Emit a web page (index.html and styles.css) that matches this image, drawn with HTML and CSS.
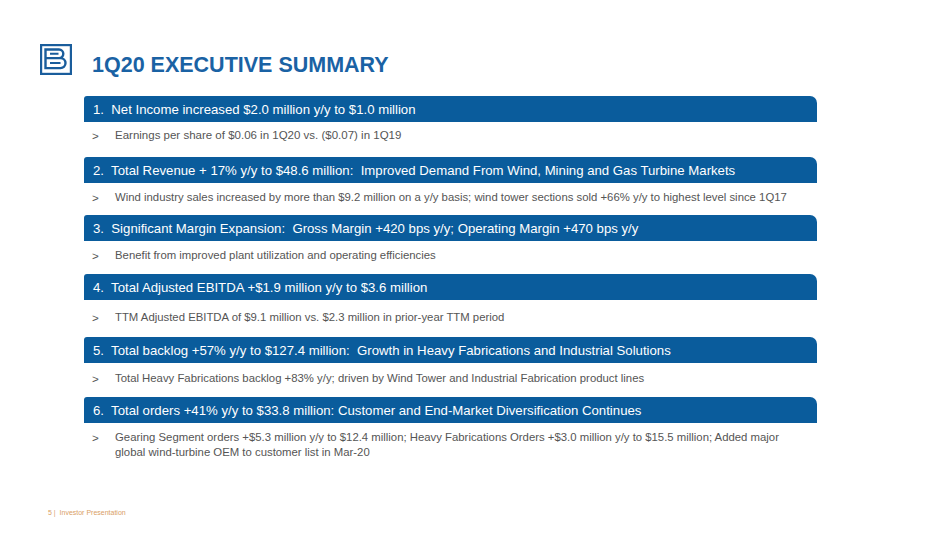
FILE: index.html
```html
<!DOCTYPE html>
<html lang="en">
<head>
<meta charset="utf-8">
<title>1Q20 Executive Summary</title>
<link rel="stylesheet" href="styles.css">
</head>
<body>
<div class="slide">
  <header class="head">
    <svg class="logo" width="32" height="31" viewBox="0 0 32 31">
      <rect x="1.1" y="1.1" width="29.8" height="28.8" fill="none" stroke="#1a5d9c" stroke-width="2.2"/>
      <path d="M5.5 5.5 H19 a4.3 4.3 0 0 1 0 8.6 H5.5 Z M5.5 14.1 H20.5 a5 5 0 0 1 0 10 H5.5 Z" fill="none" stroke="#1a5d9c" stroke-width="2.4"/>
      <path d="M10 9.8 H18.5 M10 19.1 H20.5" stroke="#1a5d9c" stroke-width="2"/>
    </svg>
    <h1 class="title">1Q20 EXECUTIVE SUMMARY</h1>
  </header>
  <ol class="items">
    <li class="item i1">
      <div class="bar">1.&nbsp; Net Income increased $2.0 million y/y to $1.0 million</div>
      <div class="sub"><span class="gt">&gt;</span><span>Earnings per share of $0.06 in 1Q20 vs. ($0.07) in 1Q19</span></div>
    </li>
    <li class="item i2">
      <div class="bar">2.&nbsp; Total Revenue + 17% y/y to $48.6 million:&nbsp; Improved Demand From Wind, Mining and Gas Turbine Markets</div>
      <div class="sub"><span class="gt">&gt;</span><span>Wind industry sales increased by more than $9.2 million on a y/y basis; wind tower sections sold +66% y/y to highest level since 1Q17</span></div>
    </li>
    <li class="item i3">
      <div class="bar">3.&nbsp; Significant Margin Expansion:&nbsp; Gross Margin +420 bps y/y; Operating Margin +470 bps y/y</div>
      <div class="sub"><span class="gt">&gt;</span><span>Benefit from improved plant utilization and operating efficiencies</span></div>
    </li>
    <li class="item i4">
      <div class="bar">4.&nbsp; Total Adjusted EBITDA +$1.9 million y/y to $3.6 million</div>
      <div class="sub"><span class="gt">&gt;</span><span>TTM Adjusted EBITDA of $9.1 million vs. $2.3 million in prior-year TTM period</span></div>
    </li>
    <li class="item i5">
      <div class="bar">5.&nbsp; Total backlog +57% y/y to $127.4 million:&nbsp; Growth in Heavy Fabrications and Industrial Solutions</div>
      <div class="sub"><span class="gt">&gt;</span><span>Total Heavy Fabrications backlog +83% y/y; driven by Wind Tower and Industrial Fabrication product lines</span></div>
    </li>
    <li class="item i6">
      <div class="bar">6.&nbsp; Total orders +41% y/y to $33.8 million: Customer and End-Market Diversification Continues</div>
      <div class="sub"><span class="gt">&gt;</span><span>Gearing Segment orders +$5.3 million y/y to $12.4 million; Heavy Fabrications Orders +$3.0 million y/y to $15.5 million; Added major global wind-turbine OEM to customer list in Mar-20</span></div>
    </li>
  </ol>
  <footer class="foot">5 |&nbsp; Investor Presentation</footer>
</div>
</body>
</html>
```
FILE: styles.css
```css
html, body {
  margin: 0;
  padding: 0;
  background: #ffffff;
}
body {
  font-family: "Liberation Sans", Arial, sans-serif;
  width: 950px;
  height: 534px;
  overflow: hidden;
}
.slide {
  position: relative;
  width: 950px;
  height: 534px;
  display: flex;
  flex-direction: column;
}
.head {
  display: flex;
  align-items: center;
  padding: 44px 0 0 40px;
  height: 31px;
}
.logo {
  display: block;
  flex: none;
}
.title {
  margin: 0 0 0 20px;
  font-size: 21.5px;
  font-weight: bold;
  color: #1a62a4;
  letter-spacing: 0;
  line-height: 1;
  position: relative;
  top: 6px;
}
.items {
  list-style: none;
  margin: 21px 0 0 84px;
  padding: 0;
  width: 733px;
}
.item {
  display: flex;
  flex-direction: column;
}
.bar {
  height: 26px;
  background: #0a5c9c;
  color: #ffffff;
  font-size: 13.2px;
  line-height: 27px;
  padding-left: 9px;
  border-radius: 3px 7px 0 0;
  white-space: nowrap;
}
.sub {
  display: flex;
  color: #555555;
  font-size: 11.35px;
  line-height: 15px;
  padding: 6px 0 0 8px;
  height: 29px;
  box-sizing: content-box;
}
.sub .gt {
  width: 23px;
  flex: none;
  font-size: 11.6px;
}
.i1 .sub { padding-top: 6px; height: 29px; font-size: 11.5px; }
.i2 .sub { padding-top: 7px; height: 25px; }
.i3 .sub { padding-top: 7px; height: 26px; }
.i4 .sub { padding-top: 10px; height: 27px; }
.i5 .sub { padding-top: 8px; height: 26px; }
.i6 .sub { padding-top: 7px; padding-right: 20px; }
.foot {
  position: absolute;
  left: 48px;
  top: 509px;
  font-size: 7px;
  color: #d9a066;
}
```
